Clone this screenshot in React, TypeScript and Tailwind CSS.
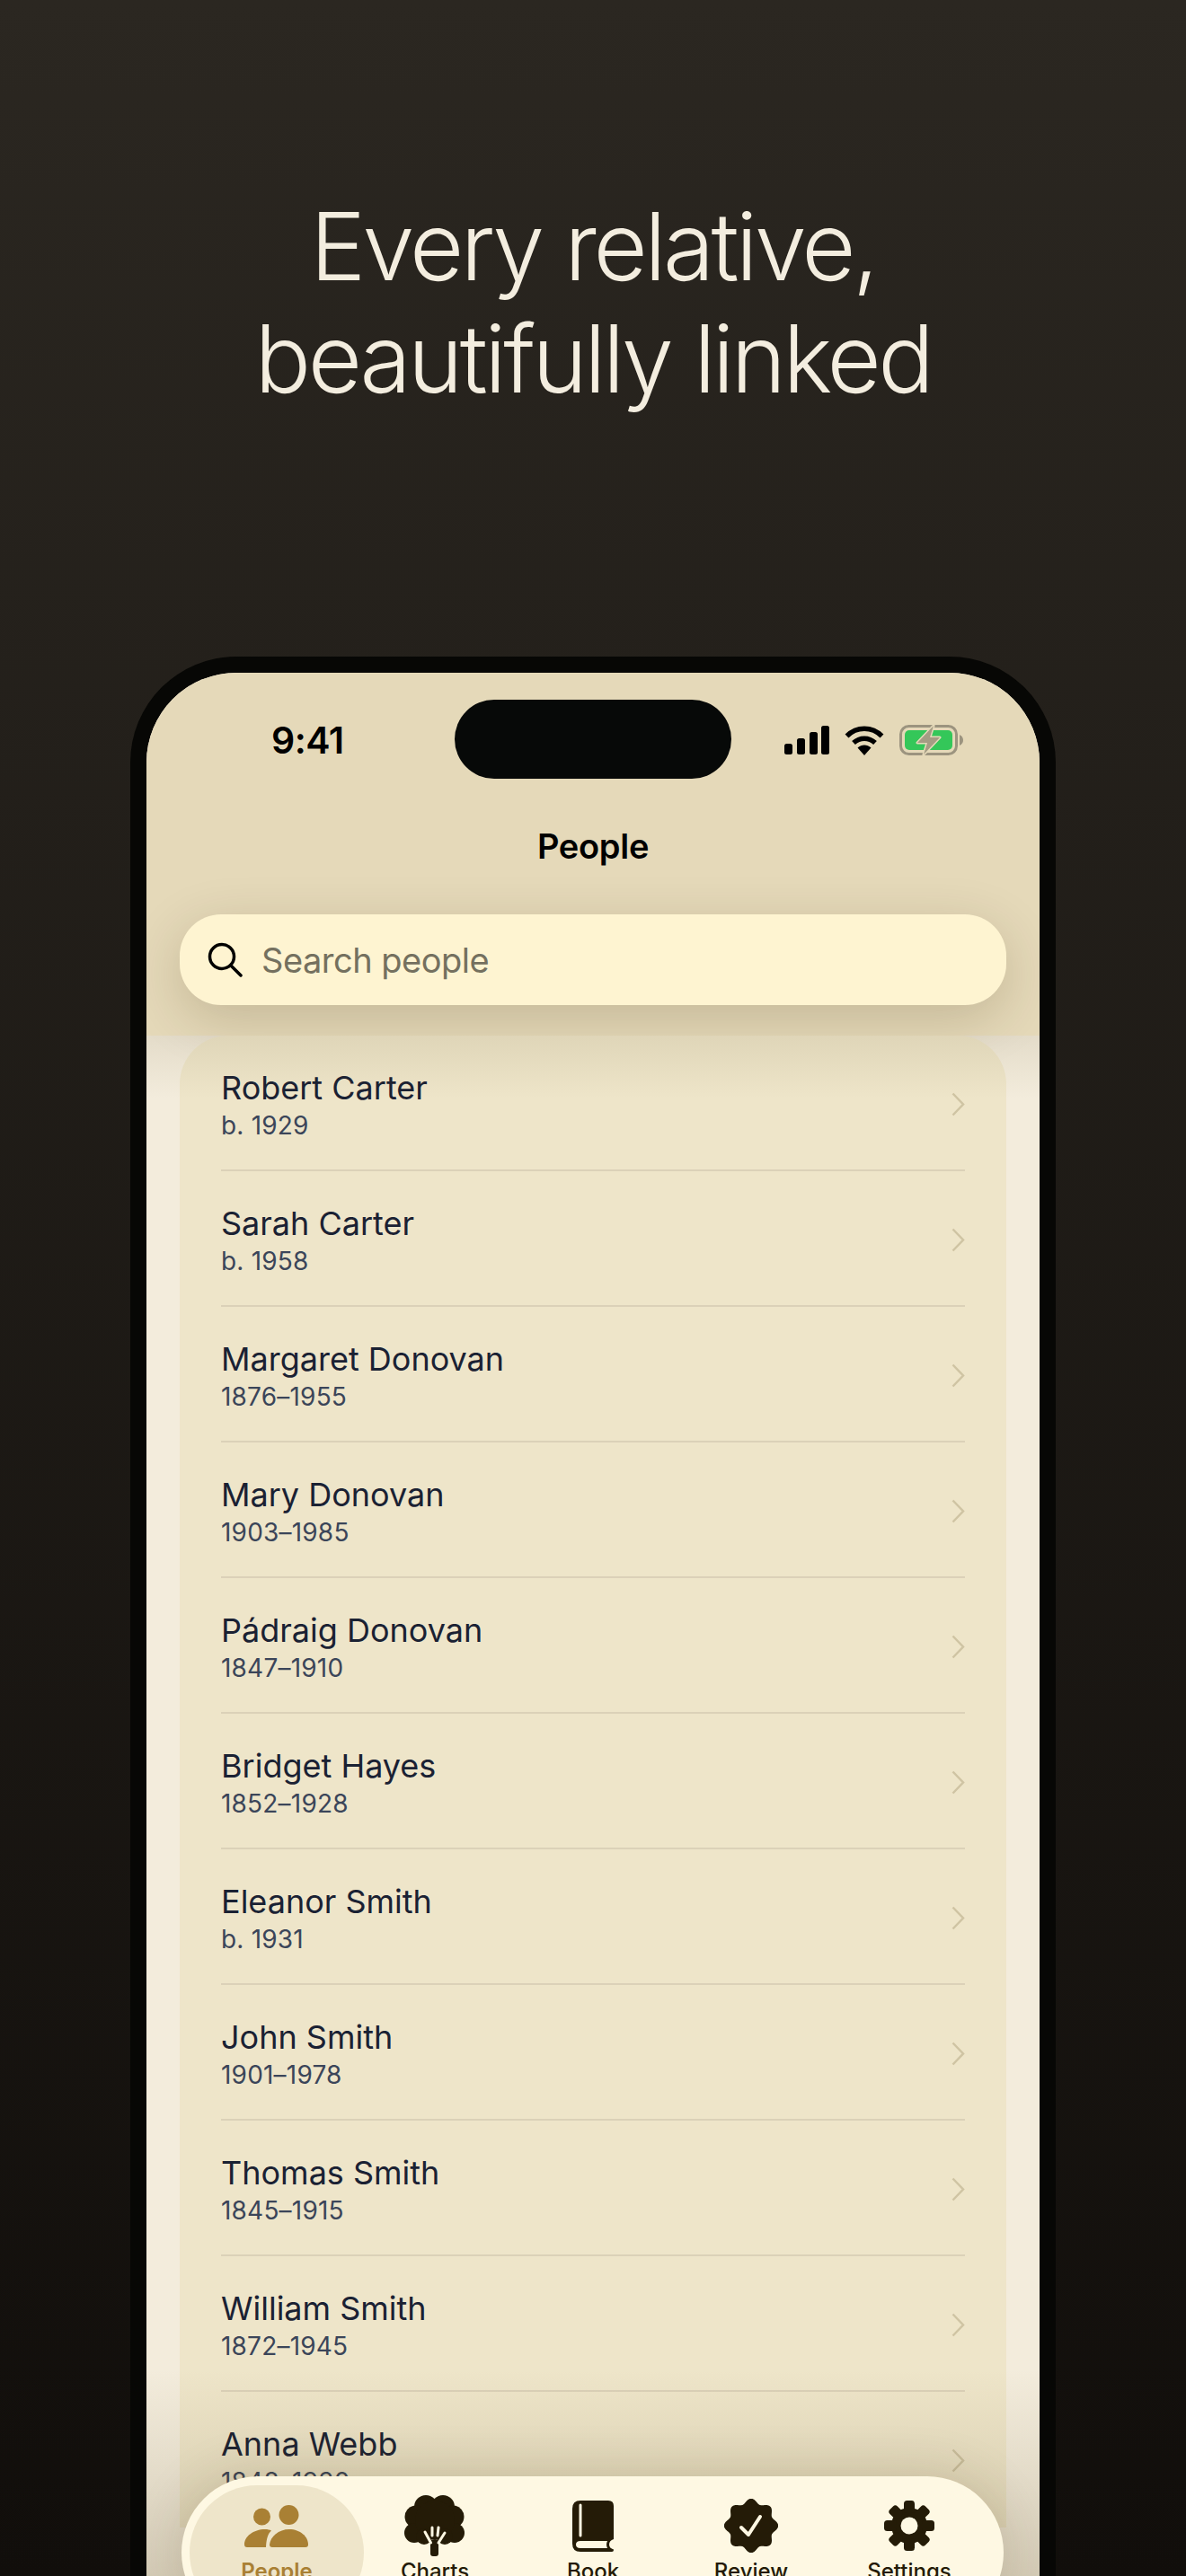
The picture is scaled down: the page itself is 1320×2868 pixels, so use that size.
import React from "react";

const people: [string, string][] = [
  ["Robert Carter", "b. 1929"],
  ["Sarah Carter", "b. 1958"],
  ["Margaret Donovan", "1876–1955"],
  ["Mary Donovan", "1903–1985"],
  ["Pádraig Donovan", "1847–1910"],
  ["Bridget Hayes", "1852–1928"],
  ["Eleanor Smith", "b. 1931"],
  ["John Smith", "1901–1978"],
  ["Thomas Smith", "1845–1915"],
  ["William Smith", "1872–1945"],
  ["Anna Webb", "1848–1930"],
];

const DARK = "#241b07";

function badgePath() {
  const pts: string[] = [];
  for (let i = 0; i < 240; i++) {
    const t = (i / 240) * Math.PI * 2;
    const c = Math.cos(8 * t);
    const r = 27.6 + 2.6 * c;
    pts.push(`${(30 + r * Math.sin(t)).toFixed(2)} ${(30 - r * Math.cos(t)).toFixed(2)}`);
  }
  return "M" + pts.join("L") + "Z";
}

const PeopleIcon = () => (
  <svg width="72" height="49" viewBox="0 0 72 49" fill="#a98034">
    <circle cx="19.5" cy="14" r="9.5" />
    <circle cx="49.5" cy="12" r="11" />
    <path d="M0 45C0 36 10 28 23 28C26 28 28 28.500 30 29.500C26 33 24.500 39 24 48H3C1 48 0 47 0 45Z" />
    <path d="M28 45C29 36 38 28 50 28C62 28 71 36 71 45C71 47 70 48 68 48H31C29 48 28 47 28 45Z" />
  </svg>
);

const TreeIcon = () => (
  <svg width="68" height="68" viewBox="0 0 68 68">
    <g fill={DARK}>
      <circle cx="24" cy="13" r="13" />
      <circle cx="43" cy="13" r="13" />
      <circle cx="13" cy="24" r="12.500" />
      <circle cx="54" cy="24" r="12.500" />
      <circle cx="11" cy="42" r="11" />
      <circle cx="56" cy="42" r="11" />
      <circle cx="34" cy="28" r="22" />
      <circle cx="22" cy="46" r="9" />
      <circle cx="45" cy="46" r="9" />
      <path d="M29 50H38V65Q38 68 35 68H32Q29 68 29 65Z" />
    </g>
    <g stroke="#fef8e3" strokeWidth="3" fill="none" strokeLinecap="round">
      <path d="M23 41L29.500 53" />
      <path d="M45 42L38 53" />
      <path d="M31 36V45" />
      <path d="M38 36L37 45" />
    </g>
  </svg>
);

const BookIcon = () => (
  <svg width="46" height="57" viewBox="0 0 46 57">
    <path
      fill={DARK}
      d="M9 0H40Q46 0 46 6V43Q41 44.500 41 49Q41 53 46 54.500V55Q46 57 44 57H9Q0 57 0 48V9Q0 0 9 0Z"
    />
    <path stroke="#fef8e3" strokeWidth="3" strokeLinecap="round" d="M9 5V39" />
    <path fill="#fef8e3" d="M9 45H39Q37 49 39 53H9Q4 53 4 49Q4 45 9 45Z" />
  </svg>
);

const BadgeIcon = () => (
  <svg width="60" height="60" viewBox="0 0 60 60">
    <path d={badgePath()} fill={DARK} />
    <path
      d="M19 32L27 40L40 20"
      fill="none"
      stroke="#fef8e3"
      strokeWidth="4"
      strokeLinecap="round"
      strokeLinejoin="round"
    />
  </svg>
);

const GearIcon = () => (
  <svg width="56" height="56" viewBox="0 0 56 56">
    <circle cx="28" cy="28" r="20" fill={DARK} />
    {[0, 45, 90, 135, 180, 225, 270, 315].map((a) => (
      <rect
        key={a}
        x="22"
        y="0"
        width="12"
        height="14"
        rx="3.500"
        fill={DARK}
        transform={`rotate(${a} 28 28)`}
      />
    ))}
    <circle cx="28" cy="28" r="9.500" fill="#fef8e3" />
  </svg>
);

const Signal = () => (
  <svg width="50" height="32" viewBox="0 0 50 32" fill="#000">
    <rect x="0" y="20" width="9" height="12" rx="2.500" />
    <rect x="14" y="14" width="9" height="18" rx="2.500" />
    <rect x="28" y="7" width="9" height="25" rx="2.500" />
    <rect x="41" y="0" width="9" height="32" rx="2.500" />
  </svg>
);

const Wifi = () => (
  <svg width="44" height="33" viewBox="0 0 44 33" fill="none" stroke="#000" strokeWidth="5.500">
    <path d="M2.500 11.500C13.500 0.500 30.500 0.500 41.500 11.500" />
    <path d="M10 19C17 12.500 27 12.500 34 19" />
    <path fill="#000" stroke="none" d="M14.500 24.500C19 20.500 25 20.500 29.500 24.500L22 33Z" />
  </svg>
);

const Battery = () => (
  <svg width="71" height="34" viewBox="0 0 71 34">
    <rect x="1.500" y="1.500" width="62" height="31" rx="9" fill="none" stroke="#9c947f" strokeWidth="3" />
    <rect x="6" y="6" width="53" height="22" rx="5" fill="#34c759" />
    <path d="M67 11Q71 13 71 17Q71 21 67 23Z" fill="#9c947f" />
    <path
      d="M38 1L20 20H31L27 33L45 14H34Z"
      fill="#a59c84"
      stroke="#e5d9b9"
      strokeWidth="3"
      strokeLinejoin="round"
      paintOrder="stroke"
    />
  </svg>
);

const SearchIcon = () => (
  <svg width="39" height="39" viewBox="0 0 39 39" fill="none" stroke="#000" strokeWidth="3.500" strokeLinecap="round">
    <circle cx="16" cy="16" r="13.500" />
    <path d="M26 26L37 37" />
  </svg>
);

const Chevron = () => (
  <svg width="15" height="27" viewBox="0 0 15 27" fill="none" stroke="#cfc4a3" strokeWidth="2.500">
    <path d="M1.500 1.500L13 13.500L1.500 25.500" />
  </svg>
);

const tabs: { label: string; icon: React.ReactNode; active?: boolean }[] = [
  { label: "People", icon: <PeopleIcon />, active: true },
  { label: "Charts", icon: <TreeIcon /> },
  { label: "Book", icon: <BookIcon /> },
  { label: "Review", icon: <BadgeIcon /> },
  { label: "Settings", icon: <GearIcon /> },
];

export default function App() {
  return (
    <div className="h-[2868px] w-[1320px] overflow-hidden bg-linear-to-b from-[#2b2721] to-[#110e0b] font-[Inter,sans-serif] flex flex-col items-center">
      <h1 className="mt-[212px] h-[269px] text-center text-[104px] leading-[125px] font-[350] tracking-[-3.5px] text-[#f3eddf]">
        Every relative,
        <br />
        beautifully linked
      </h1>
      <div className="mt-[250px] w-[1030px] flex-1 min-h-0 rounded-t-[118px] bg-[#070705] px-[18px] pt-[18px]">
        <div className="relative h-full overflow-hidden rounded-t-[100px] bg-[#f3ecdc] flex flex-col">
          <header className="h-[404px] shrink-0 bg-[#e5d9b9] flex flex-col">
            <div className="h-[118px] flex items-center justify-between mt-[16px] pl-[139px] pr-[85px]">
              <span className="text-[41px] leading-none font-semibold tracking-[-0.5px] text-black">9:41</span>
              <div className="flex items-center gap-[17px]">
                <Signal />
                <Wifi />
                <Battery />
              </div>
            </div>
            <h2 className="mt-[36px] text-center text-[38px] leading-[46px] font-semibold tracking-[-0.3px] text-black">People</h2>
            <div className="mt-[53px] mx-[37px] h-[101px] rounded-[46px] bg-[#fef4d1] shadow-[0_16px_60px_rgba(60,45,10,0.2)] flex items-center pl-[31px] gap-[21px]">
              <SearchIcon />
              <span className="text-[38px] leading-none tracking-[-0.5px] text-[#74705f]">Search people</span>
            </div>
          </header>

          <div className="relative flex-1 min-h-0 overflow-hidden px-[37px]">
            <div className="rounded-t-[54px] bg-[#eee5c9] pl-[46px] pr-[46px]">
              {people.map(([name, sub]) => (
                <div
                  key={name}
                  className="h-[151px] pt-[3px] border-b-2 border-[#dbd1b8] flex items-center justify-between"
                >
                  <div className="flex flex-col">
                    <span className="text-[36px] leading-[44px] text-[#1a2133]">{name}</span>
                    <span className="text-[28px] leading-[34px] tracking-[0.2px] text-[#3b4559] mt-[3px]">{sub}</span>
                  </div>
                  <Chevron />
                </div>
              ))}
            </div>
            <div className="absolute inset-x-0 top-0 h-[70px] bg-linear-to-b from-[#5a4a20]/10 to-transparent" />
            <div className="absolute inset-x-0 bottom-0 h-[230px] bg-linear-to-b from-transparent to-[#5a4a20]/20" />
          </div>

          <div className="absolute left-1/2 top-[30px] -translate-x-1/2 h-[88px] w-[308px] rounded-full bg-[#070908]" />

          <nav className="absolute left-[39px] top-[2008px] h-[170px] w-[915px] rounded-[85px] bg-[#fef8e3] pl-[18px] flex shadow-[0_0_60px_rgba(60,45,10,0.16)]">
            {tabs.map((t) => (
              <div key={t.label} className="relative w-[176px] h-full flex flex-col items-center">
                {t.active && (
                  <div className="absolute left-[-9px] right-[-9px] top-[10px] h-[150px] rounded-[75px] bg-[#eee5ca]" />
                )}
                <div className="relative h-[68px] mt-[21px] flex items-center justify-center">{t.icon}</div>
                <span
                  className={
                    t.active
                      ? "relative mt-[2px] text-[24px] leading-[30px] font-semibold text-[#a98034]"
                      : "relative mt-[2px] text-[24px] leading-[30px] font-medium text-[#241b07]"
                  }
                >
                  {t.label}
                </span>
              </div>
            ))}
          </nav>
        </div>
      </div>
    </div>
  );
}
